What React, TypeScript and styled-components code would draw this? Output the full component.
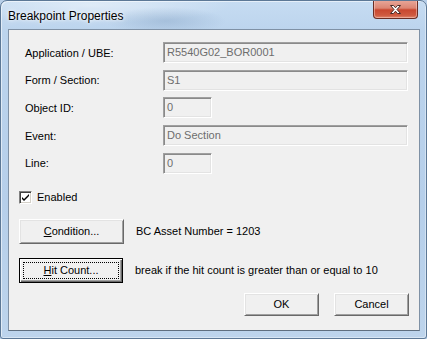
import React from "react";
import styled, { createGlobalStyle } from "styled-components";

const Global = createGlobalStyle`
  html, body { margin: 0; padding: 0; background: #b8cfe8; }
  body { font-family: "Liberation Sans", Arial, sans-serif; }
  #root { width: 427px; height: 339px; }
`;

const Window = styled.div`
  box-sizing: border-box;
  width: 427px;
  height: 339px;
  display: flex;
  flex-direction: column;
  border: 1px solid #5c7896;
  border-radius: 7px 7px 3px 3px;
  overflow: hidden;
  background:
    radial-gradient(ellipse 60px 14px at 165px 20px, rgba(120, 150, 185, 0.35), rgba(120, 150, 185, 0) 100%),
    radial-gradient(ellipse 140px 18px at 90px 4px, rgba(255, 255, 255, 0.45), rgba(255, 255, 255, 0) 100%),
    linear-gradient(to bottom, #c6dcf2 0px, #bcd4ed 30px, #b6cfea 200px, #bdd4ec 339px);
  box-shadow: inset 1px 1px 0 rgba(255, 255, 255, 0.55), inset -1px -1px 0 rgba(255, 255, 255, 0.4);
`;

const TitleBar = styled.div`
  height: 28px;
  display: flex;
  align-items: flex-start;
  justify-content: space-between;
  padding: 0 8px 0 7px;
`;

const Title = styled.div`
  font-family: "Liberation Sans", Arial, sans-serif;
  font-size: 12px;
  color: #000;
  margin-top: 8px;
  text-shadow: 0 0 6px rgba(255, 255, 255, 0.9), 0 0 3px rgba(255, 255, 255, 0.9);
`;

const CloseButton = styled.div`
  box-sizing: border-box;
  width: 45px;
  height: 19px;
  margin-top: -1px;
  display: flex;
  align-items: center;
  justify-content: center;
  border: 1px solid #6a2d24;
  border-top: none;
  border-radius: 0 0 4px 4px;
  background: linear-gradient(to bottom, #e9a99b 0%, #dc8573 45%, #c9472f 55%, #cf5a40 85%, #e0876d 100%);
  box-shadow: inset 0 0 0 1px rgba(255, 220, 210, 0.45);
`;

const Body = styled.div`
  flex: 1;
  display: flex;
  padding: 0 6px 7px 7px;
`;

const Client = styled.div`
  box-sizing: border-box;
  flex: 1;
  display: flex;
  flex-direction: column;
  background: #f0f0f0;
  border: 1px solid #7f91a5;
  border-bottom-color: #5f6f80;
  padding: 12px 10px 0 10px;
  font-family: "Liberation Sans", Arial, sans-serif;
  font-size: 11px;
  color: #000;
`;

const FieldGrid = styled.div`
  display: grid;
  grid-template-columns: 138px 1fr;
  row-gap: 6.7px;
  margin-left: 6px;
  align-items: center;
`;

const Label = styled.div`
  white-space: nowrap;
`;

const Field = styled.div<{ $w: number }>`
  box-sizing: border-box;
  width: ${(p) => p.$w}px;
  height: 21px;
  display: flex;
  align-items: center;
  padding: 0 3px 1px;
  background: #f0f0f0;
  border: 1px solid;
  border-color: #a0a0a0 #ffffff #ffffff #a0a0a0;
  box-shadow: inset 1px 1px 0 #8a8a8a, inset -1px -1px 0 #e3e3e3;
  color: #6d6d6d;
  white-space: nowrap;
`;

const CheckRow = styled.label`
  display: flex;
  align-items: center;
  gap: 5px;
  margin-top: 17px;
  height: 13px;
`;

const CheckBox = styled.span`
  box-sizing: border-box;
  width: 13px;
  height: 13px;
  display: flex;
  align-items: center;
  justify-content: center;
  background: #fff;
  border: 1px solid;
  border-color: #808080 #ffffff #ffffff #808080;
  box-shadow: inset 1px 1px 0 #404040, inset -1px -1px 0 #d4d0c8;
`;

const ActionRow = styled.div<{ $top: number }>`
  display: flex;
  align-items: center;
  gap: 12px;
  margin-top: ${(p) => p.$top}px;
`;

const Button = styled.div<{ $w: number; $h: number; $default?: boolean }>`
  box-sizing: border-box;
  position: relative;
  width: ${(p) => p.$w}px;
  height: ${(p) => p.$h}px;
  display: flex;
  align-items: center;
  justify-content: center;
  background: #f0f0f0;
  border: 1px solid;
  border-color: ${(p) => (p.$default ? "#000 #000 #000 #000" : "#ffffff #696969 #696969 #ffffff")};
  box-shadow: ${(p) =>
    p.$default
      ? "inset 1px 1px 0 #ffffff, inset -1px -1px 0 #696969, inset -2px -2px 0 #a0a0a0"
      : "inset 1px 1px 0 #e3e3e3, inset -1px -1px 0 #a0a0a0"};
  color: #000;
  padding-bottom: 1px;
`;

const FocusRing = styled.span`
  position: absolute;
  inset: 3px;
  border: 1px dotted #000;
  pointer-events: none;
`;

const Note = styled.div`
  white-space: nowrap;
`;

const Footer = styled.div`
  display: flex;
  justify-content: flex-end;
  gap: 15px;
  margin-top: 10px;
`;

const Check = () => (
  <svg width="9" height="9" viewBox="0 0 9 9">
    <path d="M1 4 L3 6 L8 1 L8 3 L3 8 L1 6 Z" fill="#000" />
  </svg>
);

const CloseX = () => (
  <svg width="13" height="11" viewBox="0 0 13 11">
    <path
      d="M1.5 1.5 L4.5 1.5 L6.5 3.8 L8.5 1.5 L11.5 1.5 L8 5.5 L11.5 9.5 L8.5 9.5 L6.5 7.2 L4.5 9.5 L1.5 9.5 L5 5.5 Z"
      fill="#ffffff"
      stroke="#4a2a26"
      strokeWidth="1"
      strokeLinejoin="round"
    />
  </svg>
);

const fields: { label: string; value: string; w: number }[] = [
  { label: "Application / UBE:", value: "R5540G02_BOR0001", w: 245 },
  { label: "Form / Section:", value: "S1", w: 245 },
  { label: "Object ID:", value: "0", w: 49 },
  { label: "Event:", value: "Do Section", w: 245 },
  { label: "Line:", value: "0", w: 49 },
];

export default function App() {
  return (
    <>
      <Global />
      <Window>
        <TitleBar>
          <Title>Breakpoint Properties</Title>
          <CloseButton>
            <CloseX />
          </CloseButton>
        </TitleBar>
        <Body>
          <Client>
            <FieldGrid>
              {fields.map((f) => (
                <React.Fragment key={f.label}>
                  <Label>{f.label}</Label>
                  <Field $w={f.w}>{f.value}</Field>
                </React.Fragment>
              ))}
            </FieldGrid>
            <CheckRow>
              <CheckBox>
                <Check />
              </CheckBox>
              Enabled
            </CheckRow>
            <ActionRow $top={15}>
              <Button $w={105} $h={25}>
                <span>
                  <u>C</u>ondition...
                </span>
              </Button>
              <Note>BC Asset Number = 1203</Note>
            </ActionRow>
            <ActionRow $top={14}>
              <Button $w={104} $h={25} $default>
                <FocusRing />
                <span>
                  <u>H</u>it Count...
                </span>
              </Button>
              <Note>break if the hit count is greater than or equal to 10</Note>
            </ActionRow>
            <Footer>
              <Button $w={75} $h={23}>OK</Button>
              <Button $w={75} $h={23}>Cancel</Button>
            </Footer>
          </Client>
        </Body>
      </Window>
    </>
  );
}
